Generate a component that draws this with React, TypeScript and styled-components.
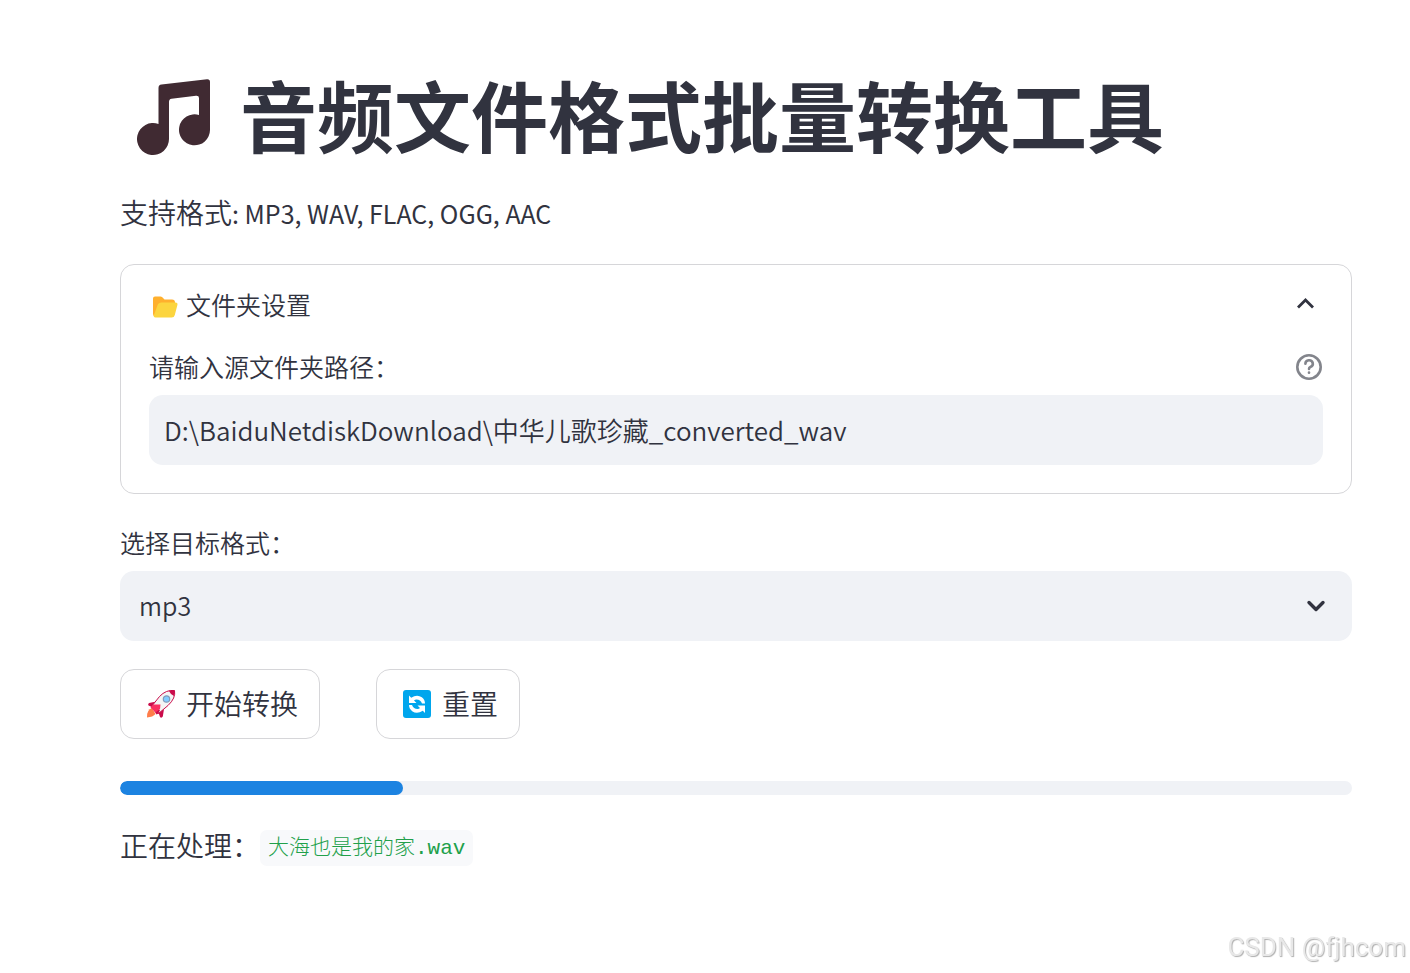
import React, { useState } from "react";
import styled, { createGlobalStyle } from "styled-components";

const GlobalStyle = createGlobalStyle`
  * { box-sizing: border-box; }
  body {
    margin: 0;
    background: #ffffff;
    color: #31333f;
    font-family: "Noto Sans CJK SC", "Noto Sans", sans-serif;
    font-size: 28px;
    font-weight: 350;
  }
`;

const Page = styled.main`
  min-height: 100vh;
  padding: 72px 58px 56px 120px;
  display: flex;
  flex-direction: column;
  gap: 28px;
`;

const Title = styled.h1`
  margin: 0;
  height: 92px;
  padding-left: 17px;
  display: flex;
  align-items: flex-start;
  gap: 28px;
  font-size: 77px;
  font-weight: 700;
  line-height: 84px;
  white-space: nowrap;

  svg { margin-top: 7px; }
`;

const Intro = styled.p`
  margin: 0;
  height: 44px;
  line-height: 40px;
`;

const Latin = styled.span`
  font-size: 25px;
  font-weight: 400;
`;

const Expander = styled.section`
  border: 1px solid #d6d6d9;
  border-radius: 14px;
  padding: 0 28px 28px;
`;

const ExpanderHeader = styled.button`
  width: 100%;
  height: 81px;
  padding: 0 8px 4px 3px;
  display: flex;
  align-items: center;
  gap: 8px;
  border: 0;
  background: none;
  color: inherit;
  font: inherit;
  font-size: 25px;
  cursor: pointer;

  svg:first-child { margin-top: 6px; }
  svg:last-child { margin-left: auto; }
`;

const Field = styled.div`
  display: flex;
  flex-direction: column;
  gap: 7px;
`;

const LabelRow = styled.div`
  height: 42px;
  display: flex;
  align-items: center;
  justify-content: space-between;
`;

const Label = styled.label`
  height: 42px;
  font-size: 25px;
  line-height: 40px;
`;

const HelpButton = styled.button`
  display: flex;
  padding: 0;
  border: 0;
  background: none;
  color: #83858c;
  cursor: pointer;
`;

const TextInput = styled.input`
  width: 100%;
  height: 70px;
  padding: 0 15px 2px;
  border: 0;
  border-radius: 14px;
  background: #f0f2f6;
  color: inherit;
  font: inherit;
  font-size: 26px;
`;

const SelectBox = styled.div`
  display: grid;
  align-items: center;

  > * { grid-area: 1 / 1; }
  > svg { justify-self: end; margin-right: 26px; pointer-events: none; }
`;

const Select = styled.select`
  appearance: none;
  width: 100%;
  height: 70px;
  padding: 0 56px 2px 19px;
  border: 0;
  border-radius: 14px;
  background: #f0f2f6;
  color: inherit;
  font: inherit;
  font-size: 25px;
`;

const Actions = styled.div`
  display: flex;
  gap: 56px;
`;

const ActionButton = styled.button`
  height: 70px;
  padding: 0 21px 2px 25px;
  display: flex;
  align-items: center;
  gap: 10px;
  border: 1px solid #d6d6d9;
  border-radius: 14px;
  background: #ffffff;
  color: inherit;
  font: inherit;
  cursor: pointer;

  svg { margin-top: 2px; }
`;

const Track = styled.div`
  height: 14px;
  margin-top: 14px;
  border-radius: 7px;
  background: #f0f2f6;
  overflow: hidden;
`;

const Bar = styled.div`
  height: 100%;
  border-radius: 7px;
  background: #1c83e1;
`;

const Status = styled.p`
  margin: 0;
  display: flex;
  align-items: flex-start;
  line-height: 44px;
`;

const FileName = styled.code`
  height: 36px;
  margin-top: 7px;
  padding: 0 8px;
  border-radius: 7px;
  background: #f8f9fb;
  color: #21a04a;
  font-family: "Liberation Mono", "Noto Sans CJK SC", monospace;
  font-size: 21px;
  font-weight: 300;
  line-height: 38px;
`;

const Watermark = styled.div`
  position: fixed;
  right: 4px;
  bottom: 10px;
  color: #e8e8e8;
  font-family: Roboto, sans-serif;
  font-size: 26px;
  font-weight: 400;
  line-height: 32px;
  text-shadow: 1px 1px 1px #b0b0b0;
`;

const NoteIcon = () => (
  <svg width="75" height="78" viewBox="0 0 75 78" aria-hidden="true">
    <path
      fill="#402a32"
      d="M21.500 9Q21.500 6 24.500 5.600L70 0.200Q73 0 73 3V51A15.500 15.500 0 1 1 62 36V19Q62 16.500 59 16.800L34.500 19.800Q32 20 32 23V60A16 16 0 1 1 21.500 45Z"
    />
  </svg>
);

const FolderIcon = () => (
  <svg width="26" height="24" viewBox="0 0 26 24" aria-hidden="true">
    <path fill="#ffb02e" d="M1 3.500Q1 1.500 3 1.500H8.500Q9.500 1.500 10.300 2.300L12.500 4.500H20Q23 4.500 23 7.500V17L5 22H3Q1 21 1 19Z" />
    <path fill="#fcd53f" d="M9.500 7.500H23.500Q26 7.500 25.400 10L22.800 20Q22.200 22.500 19.700 22.500H3.500Q1.300 22.500 1.900 20.300L5.500 10.300Q6.500 7.500 9.500 7.500Z" />
  </svg>
);

const RocketIcon = () => (
  <svg width="30" height="30" viewBox="0 0 30 30" aria-hidden="true">
    <path fill="#ff7d4a" d="M6 19Q0.500 21 1 28.500Q7 28 9.500 25Z" />
    <path fill="#ca0b4a" d="M10.500 12.500L3 14Q1.500 15 2.500 16.500L8 19ZM18 20L16.800 27.500Q15.500 29.500 14 28L12 22Z" />
    <path fill="#f4f4f4" stroke="#ca0b4a" strokeWidth="1" d="M28.500 1.500Q30 9 22 16.500L12.500 24.500L5.500 17.500L13.500 7.500Q20 0.500 28.500 1.500Z" />
    <path fill="#ca0b4a" d="M28.500 1.500Q25.500 1 23 2Q24.500 5.500 28 7Q29 4 28.500 1.500Z" />
    <path fill="#ca0b4a" d="M5.500 17.500L14 21L12.500 24.500L10.500 25.500Z" />
    <path fill="#f92f60" d="M7.500 15.500L14.500 15.500L14 20L9.500 23.500L4.500 18.500Z" />
    <circle cx="20.500" cy="10" r="3.200" fill="#83cbff" stroke="#839ab8" strokeWidth="1.200" />
  </svg>
);

const RefreshIcon = () => (
  <svg width="30" height="30" viewBox="0 0 30 30" aria-hidden="true">
    <rect x="1" y="1" width="28" height="28" rx="3" fill="#00a6ed" />
    <path fill="#ffffff" d="M7 6.500L9.200 8.800Q15 4.800 19.800 8.300Q23 10.800 23 14.500H20Q18.500 10.500 14.500 10.500Q13 10.700 12 11.600L14.500 14H7Z" />
    <path fill="#ffffff" d="M23 24L20.800 21.700Q15 25.700 10.200 22.200Q7 19.700 7 16H10Q11.500 20 15.500 20Q17 19.800 18 18.900L15.500 16.500H23Z" />
  </svg>
);

const ChevronUpIcon = () => (
  <svg width="18" height="18" viewBox="0 0 18 18" aria-hidden="true">
    <path d="M1 12.500L8.500 5L16 12.500" fill="none" stroke="#31333f" strokeWidth="2.800" />
  </svg>
);

const ChevronDownIcon = () => (
  <svg width="20" height="16" viewBox="0 0 20 16" aria-hidden="true">
    <path d="M3 4.500L10 11.500L17 4.500" fill="none" stroke="#31333f" strokeWidth="3.400" strokeLinecap="round" strokeLinejoin="round" />
  </svg>
);

const HelpIcon = () => (
  <svg width="28" height="28" viewBox="0 0 28 28" fill="none" stroke="currentColor" strokeWidth="2.600" strokeLinecap="round" aria-hidden="true">
    <circle cx="14" cy="14" r="11.700" />
    <path d="M10.400 10.700A3.700 3.500 0 1 1 15.400 14Q14 14.600 14 16" />
    <path d="M14 19.600V19.700" />
  </svg>
);

const FORMATS = ["mp3", "wav", "flac", "ogg", "aac"];

export default function App() {
  const [open, setOpen] = useState(true);
  const [path, setPath] = useState("D:\\BaiduNetdiskDownload\\中华儿歌珍藏_converted_wav");
  const [format, setFormat] = useState("mp3");
  const progress = 23;

  return (
    <>
      <GlobalStyle />
      <Page lang="zh-CN">
        <Title>
          <NoteIcon />
          音频文件格式批量转换工具
        </Title>
        <Intro>
          支持格式<Latin>: MP3, WAV, FLAC, OGG, AAC</Latin>
        </Intro>
        <Expander>
          <ExpanderHeader type="button" aria-expanded={open} onClick={() => setOpen(!open)}>
            <FolderIcon />
            文件夹设置
            <ChevronUpIcon />
          </ExpanderHeader>
          {open && (
            <Field>
              <LabelRow>
                <Label htmlFor="source">请输入源文件夹路径：</Label>
                <HelpButton type="button" aria-label="帮助">
                  <HelpIcon />
                </HelpButton>
              </LabelRow>
              <TextInput id="source" type="text" value={path} onChange={(e) => setPath(e.target.value)} />
            </Field>
          )}
        </Expander>
        <Field>
          <Label htmlFor="format">选择目标格式：</Label>
          <SelectBox>
            <Select id="format" value={format} onChange={(e) => setFormat(e.target.value)}>
              {FORMATS.map((f) => (
                <option key={f}>{f}</option>
              ))}
            </Select>
            <ChevronDownIcon />
          </SelectBox>
        </Field>
        <Actions>
          <ActionButton type="button">
            <RocketIcon />
            开始转换
          </ActionButton>
          <ActionButton type="button">
            <RefreshIcon />
            重置
          </ActionButton>
        </Actions>
        <Track role="progressbar" aria-label="转换进度" aria-valuenow={progress} aria-valuemin={0} aria-valuemax={100}>
          <Bar style={{ width: `${progress}%` }} />
        </Track>
        <Status>
          正在处理：<FileName>大海也是我的家.wav</FileName>
        </Status>
      </Page>
      <Watermark>CSDN @fjhcom</Watermark>
    </>
  );
}
